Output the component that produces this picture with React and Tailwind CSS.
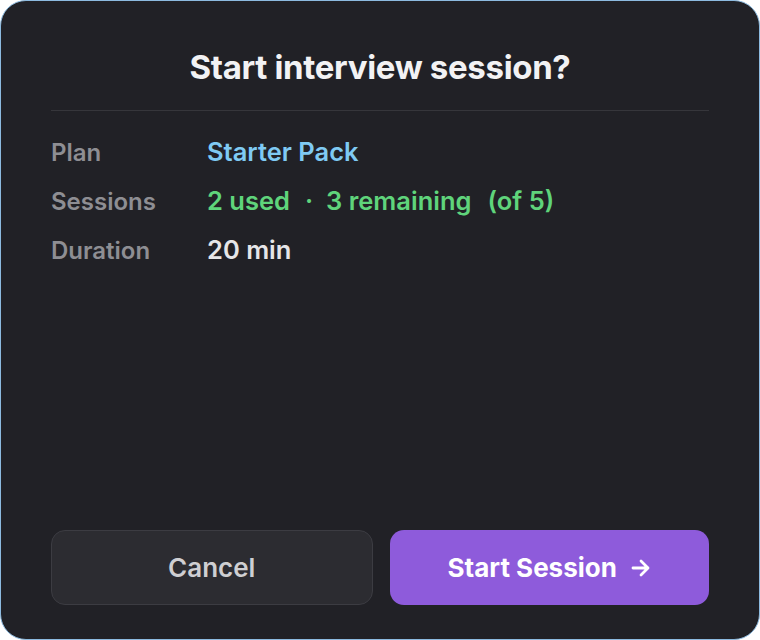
import React from "react";

export default function App() {
  return (
    <div className="w-[760px] h-[640px] bg-white" style={{ fontFamily: "Inter, 'Noto Sans', sans-serif" }}>
      <div className="w-full h-full rounded-[26px] border border-[#8dbbe0] bg-[#212126] flex flex-col px-[50px] pt-[44px] pb-[34px]">
        <h1 className="text-center text-[33px] font-bold tracking-[-0.01em] text-[#f2f2f4] leading-[44px]">
          Start interview session?
        </h1>
        <div className="mt-[21px] h-px bg-[#36363b]" />
        <div className="mt-[25px] flex flex-col gap-[16px] text-[24px] font-semibold leading-[32px]">
          <div className="flex items-baseline">
            <span className="w-[156px] text-[#8e8e93]">Plan</span>
            <span className="text-[#7fcaf3] text-[25.5px]">Starter Pack</span>
          </div>
          <div className="flex items-baseline">
            <span className="w-[156px] text-[#8e8e93]">Sessions</span>
            <span className="text-[#5fd47b] text-[25.5px] flex">
              <span>2 used</span>
              <span className="ml-[15px]">·</span>
              <span className="ml-[13px]">3 remaining</span>
              <span className="ml-[16px]">(of 5)</span>
            </span>
          </div>
          <div className="flex items-baseline">
            <span className="w-[156px] text-[#8e8e93]">Duration</span>
            <span className="text-[#e6e6e8] text-[25.5px]">20 min</span>
          </div>
        </div>
        <div className="mt-auto flex gap-[17px]">
          <button className="flex-1 h-[75px] rounded-[14px] border border-[#3c3c42] bg-[#2c2c31] text-[26px] font-semibold text-[#cfcfd2]">
            Cancel
          </button>
          <button className="flex-1 h-[75px] rounded-[14px] bg-[#8e5bdb] text-[26px] font-bold text-white flex items-center justify-center gap-[14px]">
            <span>Start Session</span>
            <svg width="20" height="18" viewBox="0 0 20 18" fill="none" stroke="white" strokeWidth="2.8" strokeLinecap="round" strokeLinejoin="round">
              <path d="M2 9h15M10 2l7 7-7 7" />
            </svg>
          </button>
        </div>
      </div>
    </div>
  );
}
